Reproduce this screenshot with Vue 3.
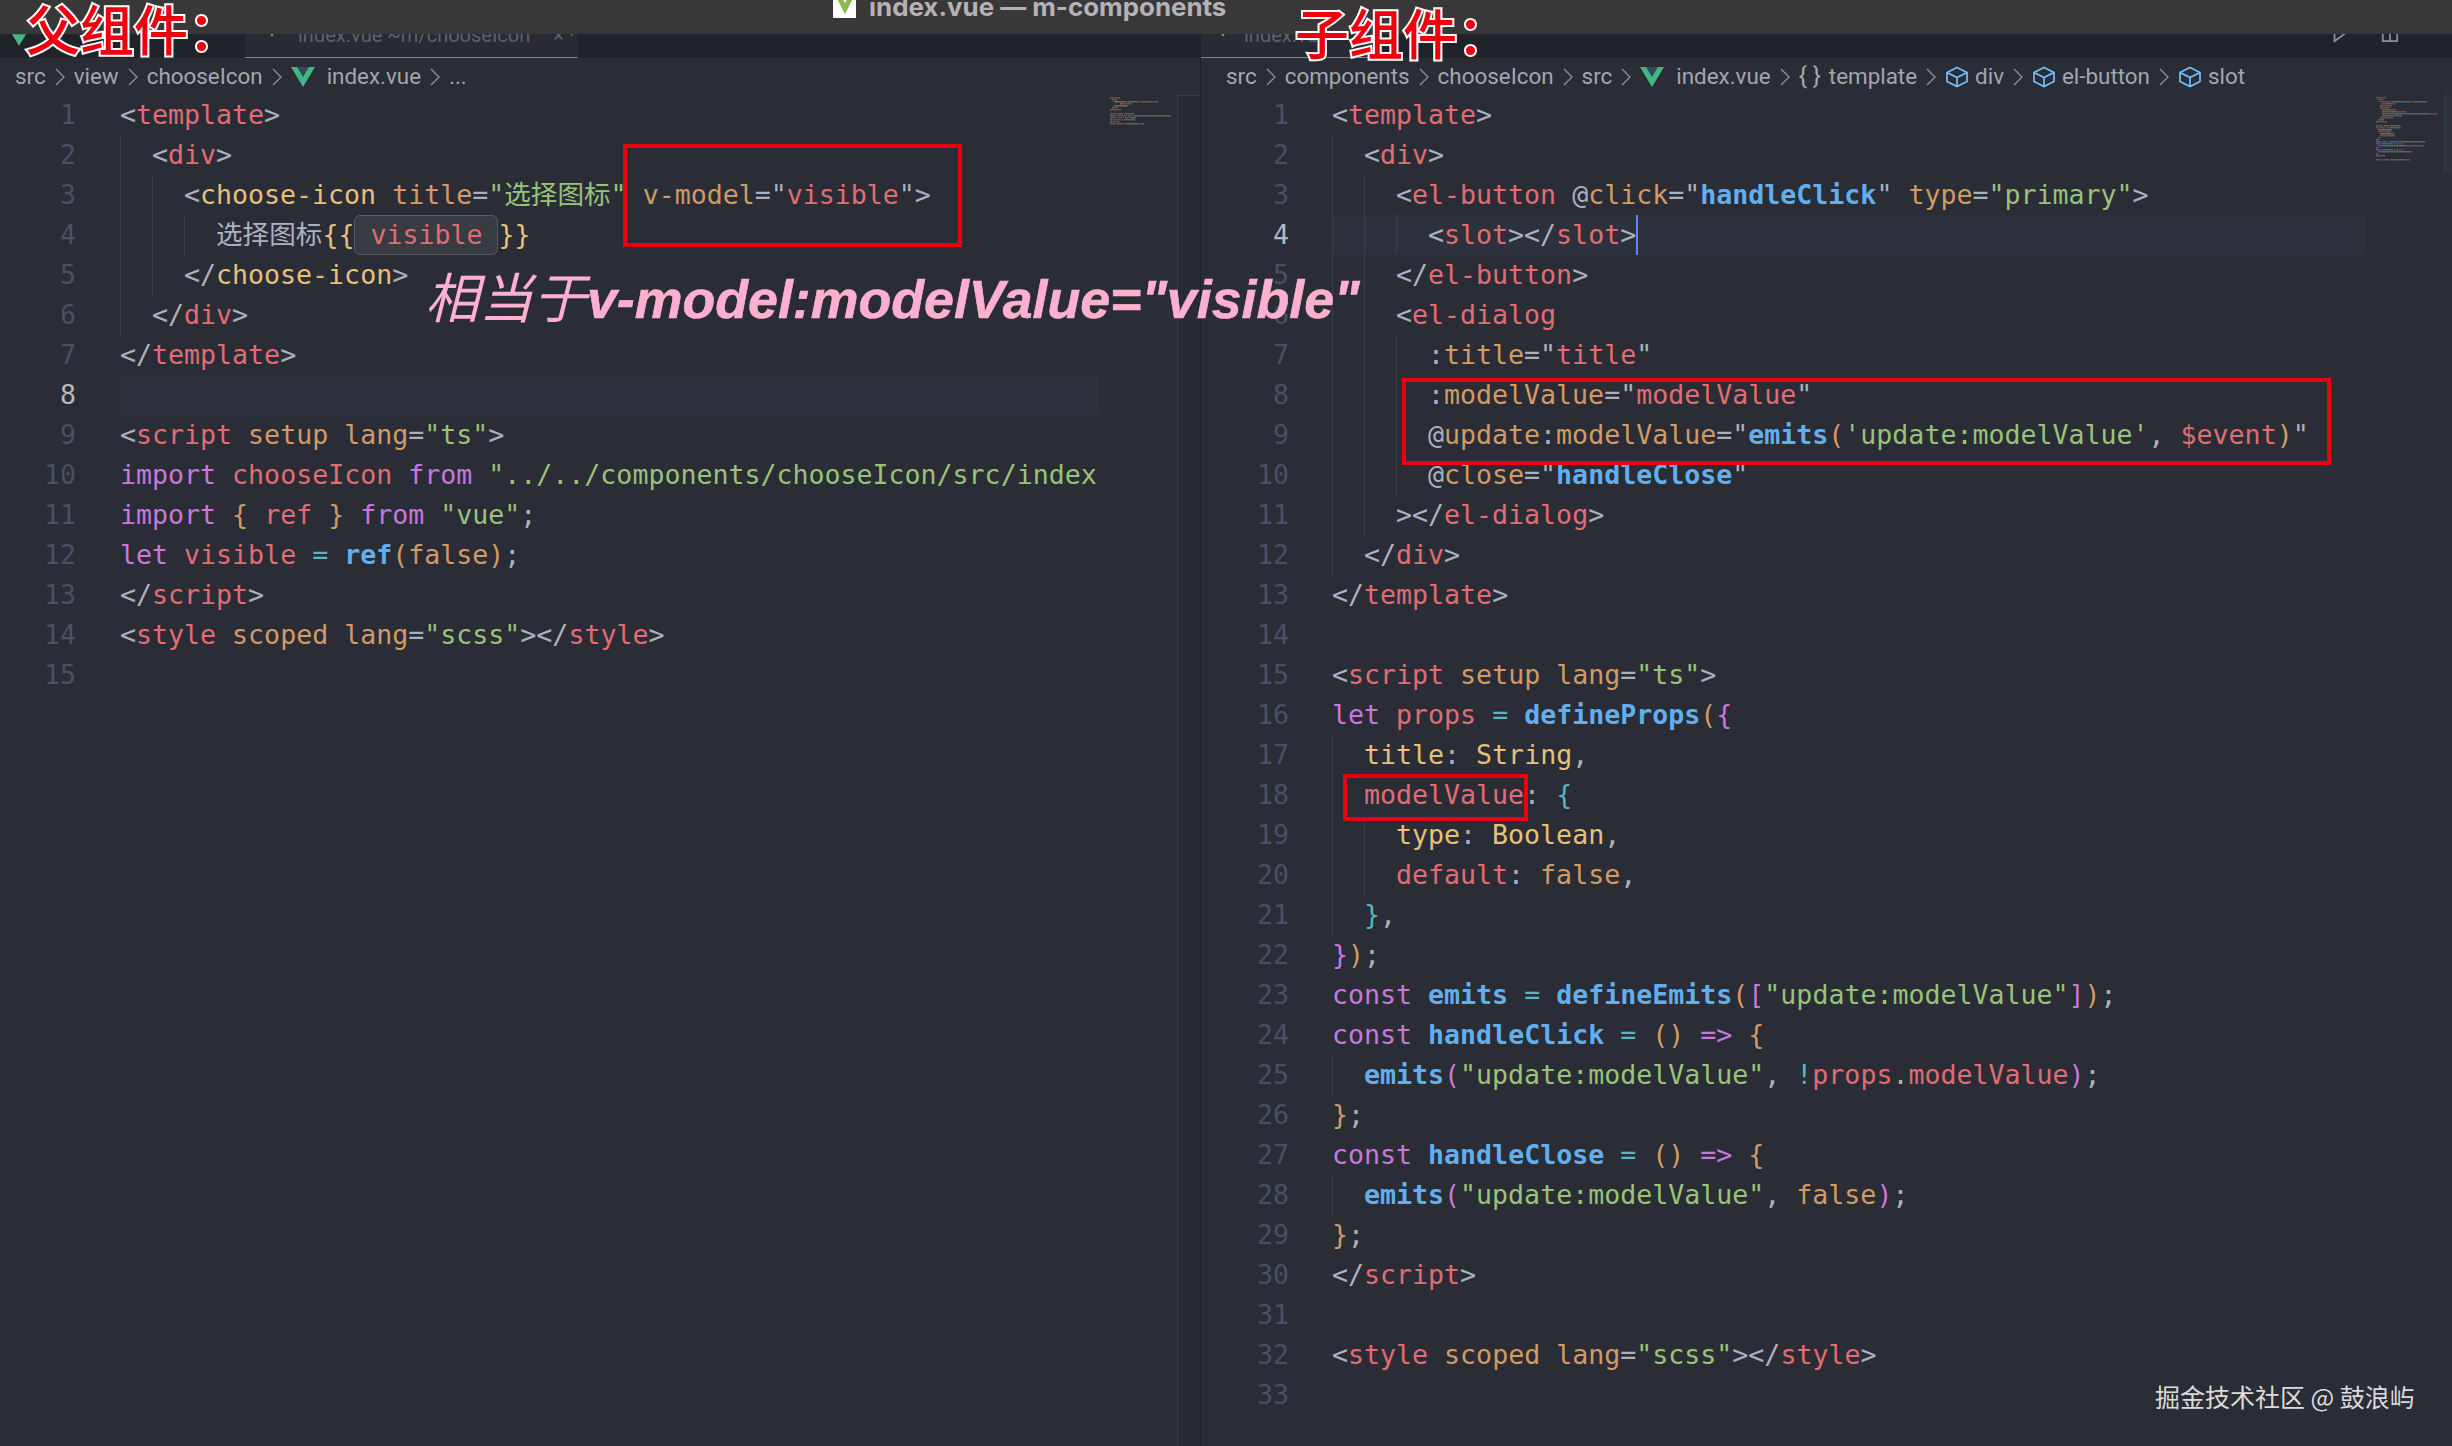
<script setup>
const leftCode = [
  '0c<|ttemplate|c>',
  '1c<|tdiv|c>',
  '2c<|ychoose-icon|w |atitle|c=|s"选择图标"|w |av-model|c=|c"|tvisible|c"|c>',
  '3w选择图标|y{{|vvisible|y}}',
  '2c</|ychoose-icon|c>',
  '1c</|tdiv|c>',
  '0c</|ttemplate|c>',
  '0',
  '0c<|tscript|w |asetup|w |alang|c=|s"ts"|c>',
  '0pimport|w |tchooseIcon|w |pfrom|w |s"../../components/chooseIcon/src/index',
  '0pimport|w |a{|w |tref|w |a}|w |pfrom|w |s"vue"|c;',
  '0plet|w |tvisible|w |n=|w |bref|a(false)|c;',
  '0c</|tscript|c>',
  '0c<|tstyle|w |ascoped|w |alang|c=|s"scss"|c></|tstyle|c>',
  '0'
]
const rightCode = [
  '0c<|ttemplate|c>',
  '1c<|tdiv|c>',
  '2c<|tel-button|w |c@|aclick|c="|bhandleClick|c"|w |atype|c=|s"primary"|c>',
  '3c<|tslot|c></|tslot|c>',
  '2c</|tel-button|c>',
  '2c<|tel-dialog',
  '3c:|atitle|c="|ttitle|c"',
  '3c:|amodelValue|c="|tmodelValue|c"',
  '3c@|aupdate|c:|amodelValue|c="|bemits|a(|s\'update:modelValue\'|c, |t$event|a)|c"',
  '3c@|aclose|c="|bhandleClose|c"',
  '2c></|tel-dialog|c>',
  '1c</|tdiv|c>',
  '0c</|ttemplate|c>',
  '0',
  '0c<|tscript|w |asetup|w |alang|c=|s"ts"|c>',
  '0plet|w |tprops|w |n=|w |bdefineProps|a(|p{',
  '1ytitle|c: |yString|c,',
  '1tmodelValue|c: |n{',
  '2ytype|c: |yBoolean|c,',
  '2tdefault|c: |afalse|c,',
  '1n}|c,',
  '0p}|a)|c;',
  '0pconst|w |bemits|w |n=|w |bdefineEmits|a(|p[|s"update:modelValue"|p]|a)|c;',
  '0pconst|w |bhandleClick|w |n=|w |a()|w |p=>|w |a{',
  '1bemits|p(|s"update:modelValue"|c, |n!|tprops|c.|tmodelValue|p)|c;',
  '0a}|c;',
  '0pconst|w |bhandleClose|w |n=|w |a()|w |p=>|w |a{',
  '1bemits|p(|s"update:modelValue"|c, |afalse|p)|c;',
  '0a}|c;',
  '0c</|tscript|c>',
  '0',
  '0c<|tstyle|w |ascoped|w |alang|c=|s"scss"|c></|tstyle|c>',
  '0'
]

const hex = { t: '#e06c75', a: '#d19a66', s: '#98c379', b: '#61afef', p: '#c678dd', c: '#abb2bf', n: '#56b6c2', y: '#e5c07b', w: '#abb2bf', v: '#e06c75' }

function parse(src) {
  return src.map((raw, i) => {
    const guides = Number(raw[0])
    const body = raw.slice(1)
    const tokens = body ? body.split('|').map((p) => ({ kind: p[0], text: p.slice(1) })) : []
    return { no: i + 1, guides, tokens }
  })
}
function minimap(lines) {
  const rects = []
  lines.forEach((line, row) => {
    let col = line.guides * 2
    line.tokens.forEach((tok) => {
      const len = tok.text.length
      if (tok.kind !== 'w') rects.push({ x: col, y: row * 2, w: len, fill: hex[tok.kind] })
      col += len
    })
  })
  return rects
}

const panes = [
  {
    id: 'left', active: 8, lines: parse(leftCode),
    crumbs: [{ t: 'src' }, { t: 'view' }, { t: 'chooseIcon' }, { t: 'index.vue', icon: 'vue' }, { t: '...' }]
  },
  {
    id: 'right', active: 4, lines: parse(rightCode),
    crumbs: [
      { t: 'src' }, { t: 'components' }, { t: 'chooseIcon' }, { t: 'src' },
      { t: 'index.vue', icon: 'vue' }, { t: 'template', icon: 'brace' },
      { t: 'div', icon: 'cube' }, { t: 'el-button', icon: 'cube' }, { t: 'slot', icon: 'cube' }
    ]
  }
].map((p) => ({ ...p, map: minimap(p.lines) }))
</script>

<template>
  <div class="app">
    <header class="titlebar">
      <span class="logo-box">
        <svg viewBox="0 0 24 24" width="22" height="22"><path d="M2 0h20L12 20z" fill="#8bb84a" /><path d="M8 0h8l-4 8z" fill="#fff" /></svg>
      </span>
      <span class="title-text">index.vue — m-components</span>
    </header>

    <main class="panes">
      <section v-for="pane in panes" :key="pane.id" class="pane" :class="pane.id">
        <div class="tabs">
          <div class="tab-first">
            <svg viewBox="0 0 24 20" width="14" height="12"><path d="M0 0h24L12 20z" fill="#41b883" /></svg>
          </div>
          <div class="tab-main">
            <template v-if="pane.id === 'left'">
              <svg viewBox="0 0 24 20" width="14" height="12"><path d="M0 0h24L12 20z" fill="#41b883" /></svg>
              <span>index.vue ~m/chooseIcon</span>
              <span class="tab-x">× ·</span>
            </template>
            <template v-else>
              <svg viewBox="0 0 24 20" width="14" height="12"><path d="M0 0h24L12 20z" fill="#41b883" /></svg>
              <span>index.vue</span>
            </template>
          </div>
          <div v-if="pane.id === 'right'" class="tab-actions">
            <svg viewBox="0 0 20 20" width="18" height="18"><path d="M5 2l11 8-11 8z" fill="none" stroke="#8b9098" stroke-width="2" /></svg>
            <svg viewBox="0 0 20 20" width="20" height="18"><path d="M2 1h16v17H2zM10 1v17" fill="none" stroke="#8b9098" stroke-width="2" /></svg>
          </div>
        </div>

        <nav class="crumbs">
          <template v-for="(c, i) in pane.crumbs" :key="i">
            <svg v-if="i > 0" class="chev" viewBox="0 0 10 20" width="10" height="20"><path d="M1 2l8 8-8 8" fill="none" stroke="#8d929a" stroke-width="1.3" /></svg>
            <span class="crumb" :class="c.icon ? 'with-' + c.icon : ''">
              <svg v-if="c.icon === 'vue'" viewBox="0 0 24 20" width="24" height="20">
                <path d="M0 0h24L12 20z" fill="#41b883" /><path d="M6 0h12l-6 10z" fill="#35495e" />
              </svg>
              <span v-if="c.icon === 'brace'" class="brace">{ }</span>
              <svg v-if="c.icon === 'cube'" viewBox="0 0 24 22" width="24" height="22">
                <path d="M12 1.500L22 6.500v9L12 20.500 2 15.500v-9zM2 6.500L12 11.500l10-5M12 11.500v9" fill="none" stroke="#75beff" stroke-width="1.700" />
              </svg>
              <span>{{ c.t }}</span>
            </span>
          </template>
        </nav>

        <div class="code">
          <div v-for="line in pane.lines" :key="line.no" class="line" :class="{ current: line.no === pane.active }">
            <span class="num">{{ line.no }}</span>
            <div class="text">
              <span v-for="g in line.guides" :key="g" class="guide"></span>
              <span v-for="(tok, k) in line.tokens" :key="k" :class="'k-' + tok.kind">{{ tok.text }}</span>
              <span v-if="line.no === pane.active && pane.id === 'right'" class="caret"></span>
            </div>
          </div>
          <svg class="minimap" :width="80" :height="pane.lines.length * 2 + 2" :viewBox="`0 0 80 ${pane.lines.length * 2 + 2}`">
            <rect v-for="(r, k) in pane.map" :key="k" :x="r.x" :y="r.y" :width="r.w" height="1.500" :fill="r.fill" opacity="0.4" />
          </svg>
          <div class="scroll-strip"></div>
        </div>
      </section>
    </main>

    <div class="label label-parent">父组件：</div>
    <div class="label label-child">子组件：</div>
    <div class="equals"><span class="eq-cjk">相当于</span>v-model:modelValue="visible"</div>
    <div class="redbox box-a"></div>
    <div class="redbox box-b"></div>
    <div class="redbox box-c"></div>
    <div class="watermark">掘金技术社区 @ 鼓浪屿</div>
  </div>
</template>

<style>
html, body { margin: 0; background: #2a2d35; }
</style>

<style scoped>
.app {
  position: relative;
  width: 2452px;
  height: 1446px;
  overflow: hidden;
  display: flex;
  flex-direction: column;
  background: #2a2d35;
  font-family: "DejaVu Sans Mono", "Noto Sans CJK SC", monospace;
}
.titlebar {
  position: relative;
  z-index: 2;
  height: 34px;
  flex: none;
  background: #3a3739;
  display: flex;
  align-items: flex-end;
  padding: 0 0 16px 833px;
  box-sizing: border-box;
  gap: 13px;
  overflow: hidden;
}
.logo-box {
  width: 23px;
  height: 18px;
  background: #fff;
  display: flex;
  justify-content: center;
  align-items: flex-end;
  overflow: hidden;
  flex: none;
}
.title-text {
  font: 700 25.900px/18px Inter, "Liberation Sans", sans-serif;
  color: #b4b2b6;
  white-space: nowrap;
  height: 18px;
  margin-bottom: 2px;
}
.panes { flex: 1; display: flex; min-height: 0; }
.pane { display: flex; flex-direction: column; min-width: 0; }
.pane.left { width: 1200px; flex: none; }
.pane.right { flex: 1; border-left: 1px solid #1f2228; box-sizing: border-box; }

.tabs {
  height: 24px;
  flex: none;
  display: flex;
  background: #20232a;
  overflow: hidden;
  font: 20px/20px Roboto, sans-serif;
  color: #5f636c;
}
.tab-first { display: none; }
.left .tab-first { display: flex; width: 245px; padding-left: 12px; box-sizing: border-box; align-items: flex-start; }
.tab-main {
  display: flex;
  align-items: flex-start;
  gap: 19px;
  padding-left: 20px;
  box-sizing: border-box;
  background: #282b33;
  border-bottom: 1px solid #7d828b;
  margin-top: -9px;
  height: 33px;
  white-space: nowrap;
}
.left .tab-main { width: 333px; }
.tab-x { margin-left: 4px; }
.right .tab-main { width: 170px; padding-left: 15px; gap: 14px; margin-right: auto; }
.tab-main svg { flex: none; }
.tab-actions { display: flex; gap: 32px; padding-right: 52px; margin-top: -9px; }

.crumbs {
  height: 37px;
  flex: none;
  display: flex;
  align-items: center;
  gap: 9px;
  font: 22.400px/37px Roboto, sans-serif;
  color: #a3a7ae;
  white-space: nowrap;
}
.left .crumbs { padding-left: 15px; }
.right .crumbs { padding-left: 25px; }
.crumb { display: inline-flex; align-items: center; gap: 8px; }
.with-vue { gap: 12px; }
.with-cube { gap: 6px; }
.brace { font-size: 24px; color: #a3a7ae; }
.chev { flex: none; }

.code { position: relative; flex: 1; min-height: 0; }
.line { display: flex; height: 40px; line-height: 40px; font-size: 26.600px; white-space: pre; }
.num {
  flex: none;
  text-align: right;
  color: #495162;
  box-sizing: border-box;
}
.left .num { width: 120px; padding-right: 44px; }
.right .num { width: 131px; padding-right: 43px; }
.line.current .num { color: #b4b8c0; }
.text { display: flex; overflow: hidden; flex: none; }
.left .text { width: 979px; }
.right .text { width: 1033px; }
.line.current .text { background: #2d313b; }
.guide {
  width: 32px;
  height: 40px;
  flex: none;
  box-sizing: border-box;
  border-left: 1px solid #3b3f48;
}
.k-t, .k-v { color: #e06c75; }
.k-a { color: #d19a66; }
.k-s { color: #98c379; }
.k-b { color: #61afef; font-weight: 700; }
.k-p { color: #c678dd; }
.k-c, .k-w { color: #abb2bf; }
.k-n { color: #56b6c2; }
.k-y { color: #e5c07b; }
.k-v {
  padding: 0 15px;
  height: 38px;
  line-height: 38px;
  background: #383b42;
  border: 1px solid #565a62;
  border-radius: 6px;
}
.caret { width: 2px; height: 40px; background: #528bff; flex: none; }

.minimap { position: absolute; top: 2px; }
.left .minimap { left: 1110px; }
.right .minimap { left: 1175px; width: 80px; }
.scroll-strip { position: absolute; top: 0; bottom: 0; border-left: 1px solid #383c45; }
.left .scroll-strip { left: 1177px; right: 0; background: #282b32; border-top: 1px solid #383c45; }
.right .scroll-strip { left: 1243px; right: 0; background: #2e323b; height: 78px; bottom: auto; z-index: 0; }

.label {
  position: absolute;
  z-index: 3;
  font: 500 54px/60px "Noto Sans CJK SC", sans-serif;
  color: #f0000f;
  -webkit-text-stroke: 4px #fff;
  paint-order: stroke fill;
  white-space: nowrap;
}
.label-parent { left: 26px; top: -2px; }
.label-child { left: 1295px; top: 2px; }
.equals {
  position: absolute;
  z-index: 3;
  left: 425px;
  top: 265px;
  font: italic 700 53.700px/60px "Liberation Sans", sans-serif;
  color: #ffb0cf;
  -webkit-text-stroke: 0.6px #ffb0cf;
  white-space: nowrap;
}
.eq-cjk { font: italic 400 54px/60px "Noto Sans CJK SC", sans-serif; -webkit-text-stroke: 0; }
.redbox { position: absolute; z-index: 3; border: 4px solid #ea000e; box-sizing: border-box; }
.box-a { left: 623px; top: 144px; width: 339px; height: 103px; }
.box-b { left: 1402px; top: 378px; width: 929px; height: 87px; }
.box-c { left: 1343px; top: 774px; width: 185px; height: 47px; }
.watermark {
  position: absolute;
  z-index: 3;
  left: 2155px;
  top: 1378px;
  font: 400 25px/36px "Noto Sans CJK SC", sans-serif;
  color: #dcdcdc;
  white-space: nowrap;
}
</style>
